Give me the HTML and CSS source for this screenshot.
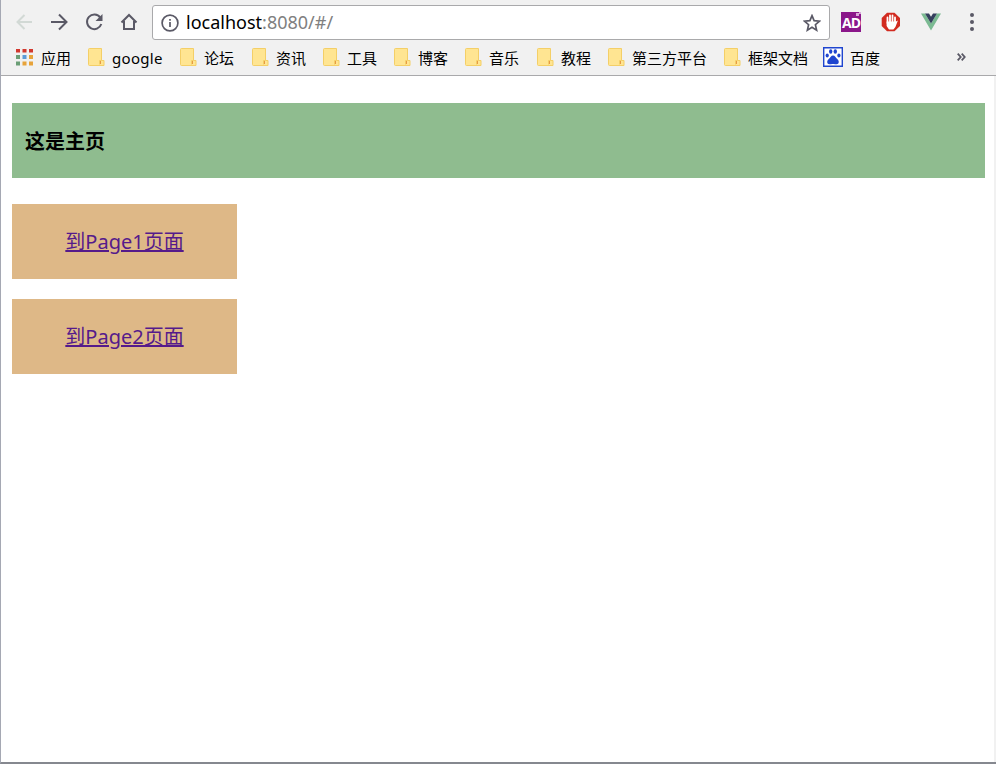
FILE: index.html
```html
<!DOCTYPE html>
<html lang="zh-CN">
<head>
<meta charset="utf-8">
<title>localhost:8080/#/</title>
<link rel="stylesheet" href="styles.css">
</head>
<body>
<svg class="defs" width="0" height="0">
  <symbol id="folder" viewBox="0 0 17 19">
    <path d="M1.500.5h12v12H16v5H1.500q-1 0-1-1V1.500q0-1 1-1z" fill="#ffe592" stroke="#f4cf67"/>
    <path d="M11.500 16.500v-4h2" fill="none" stroke="#f4cf67"/>
    <path d="M12 13h1v3h-1z" fill="#e79a45"/>
  </symbol>
</svg>
<div class="window">
  <header class="chrome">
    <div class="toolbar">
      <nav class="nav">
        <svg width="18" height="18" viewBox="0 0 18 18" class="ico faint"><path d="M17 9H2.500M9.500 2L2.500 9l7 7"/></svg>
        <svg width="18" height="18" viewBox="0 0 18 18" class="ico"><path d="M1 9h15M9 1.500L16.500 9 9 16.500"/></svg>
        <svg width="18" height="18" viewBox="0 0 18 18" class="ico"><path d="M15.300 4.600A7.300 7.300 0 1 0 16.300 11"/><path class="solid" d="M17.500 1v7h-7z"/></svg>
        <svg width="18" height="18" viewBox="0 0 18 18" class="ico"><path d="M1.500 9.500L9 2l7.500 7.500M4 8v8h10V8"/></svg>
      </nav>
      <div class="address">
        <svg width="18" height="18" viewBox="0 0 18 18" class="ico info"><circle cx="9" cy="9" r="7.900"/><path d="M9 8v5M9 5v1.800"/></svg>
        <span class="url">localhost<span class="dim">:8080/#/</span></span>
        <svg width="18" height="18" viewBox="0 0 18 18" class="ico star"><path d="M9 1.700l2.100 5 5.300.5-4 3.500 1.200 5.400L9 13.200l-4.600 2.900 1.200-5.400-4-3.500 5.300-.5z"/></svg>
      </div>
      <div class="extensions">
        <span class="ad">AD<svg width="5" height="5" viewBox="0 0 5 5"><path d="M0 1h3v3H0zM3 0h2v2H3z" fill="#d9a8d9"/></svg></span>
        <svg width="20" height="20" viewBox="0 0 20 20"><path d="M6 .7h7.500L19 6v8l-5.500 5.300H6L.7 14V6z" fill="#d22b20"/><path d="M6.500 11V5.500M9 10V3.500M11.500 10V3.500M14 11V5.500" stroke="#fff" stroke-width="1.800" stroke-linecap="round"/><path d="M5.600 9.500h9.300l2-1-2.500 6.500-2 2.500H8L5.600 14z" fill="#fff"/></svg>
        <svg width="20" height="18" viewBox="0 0 20 18"><path d="M0 .5h4l6 10 6-10h4L10 17.500z" fill="#7bba92"/><path d="M4 .5h4l2 3.200L12 .5h4l-6 10z" fill="#35405d"/></svg>
        <svg width="4" height="18" viewBox="0 0 4 18" fill="#5a5966"><circle cx="2" cy="2" r="2"/><circle cx="2" cy="9" r="2"/><circle cx="2" cy="16" r="2"/></svg>
      </div>
    </div>
    <div class="bookmarks">
      <span class="bookmark apps"><svg width="17" height="18" viewBox="0 0 17 18"><path d="M0 1h4v3.500H0zM6.500 1h4v3.500h-4zM13 1h4v3.500h-4z" fill="#d2382e"/><path d="M0 7h4v4H0zM0 13.500h4v4H0z" fill="#6b9e76"/><path d="M6.500 7h4v4h-4z" fill="#5c9bd6"/><path d="M13 7h4v4h-4zM6.500 13.500h4v4h-4zM13 13.500h4v4h-4z" fill="#e7a33a"/></svg><span>应用</span></span>
      <span class="bookmark"><svg width="17" height="19"><use href="#folder"/></svg><span class="latin">google</span></span>
      <span class="bookmark"><svg width="17" height="19"><use href="#folder"/></svg><span>论坛</span></span>
      <span class="bookmark"><svg width="17" height="19"><use href="#folder"/></svg><span>资讯</span></span>
      <span class="bookmark"><svg width="17" height="19"><use href="#folder"/></svg><span>工具</span></span>
      <span class="bookmark"><svg width="17" height="19"><use href="#folder"/></svg><span>博客</span></span>
      <span class="bookmark"><svg width="17" height="19"><use href="#folder"/></svg><span>音乐</span></span>
      <span class="bookmark"><svg width="17" height="19"><use href="#folder"/></svg><span>教程</span></span>
      <span class="bookmark"><svg width="17" height="19"><use href="#folder"/></svg><span>第三方平台</span></span>
      <span class="bookmark"><svg width="17" height="19"><use href="#folder"/></svg><span>框架文档</span></span>
      <span class="bookmark baidu"><svg width="20" height="20" viewBox="0 0 20 20"><path d="M.7.700h18.600v18.600H.7z" fill="#fff" stroke="#1f45cf" stroke-width="1.400"/><g fill="#1f45cf"><ellipse cx="4.200" cy="8.500" rx="1.600" ry="2"/><ellipse cx="7.700" cy="4.500" rx="1.700" ry="2.200"/><ellipse cx="12.300" cy="4.500" rx="1.700" ry="2.200"/><ellipse cx="15.900" cy="8.500" rx="1.600" ry="2"/><path d="M10 8.500c2 0 2.500 2 4.500 3.800s1.500 5-.8 5c-1.400 0-2.200-.4-3.700-.4s-2.300.4-3.700.4c-2.300 0-2.800-3.200-.8-5S8 8.500 10 8.500z"/></g></svg><span>百度</span></span>
      <svg class="more" width="9" height="8" viewBox="0 0 9 8"><path d="M.7.700L3.700 4l-3 3.300M4.700.700L7.700 4l-3 3.300"/></svg>
    </div>
  </header>
  <main class="page">
    <h3 class="title">这是主页</h3>
    <div class="card"><a href="#/page1">到Page1页面</a></div>
    <div class="card"><a href="#/page2">到Page2页面</a></div>
  </main>
</div>
</body>
</html>
```
FILE: styles.css
```css
* { box-sizing: border-box; }
body {
  margin: 0;
  background: #f1f1f1;
  font-family: "Noto Sans", "Noto Sans CJK SC", sans-serif;
}
.defs { position: absolute; }
svg { flex: none; display: block; }
.window {
  display: flex;
  flex-direction: column;
  height: 764px;
  border-left: 1px solid #a5a8b3;
  border-bottom: 2px solid #85888f;
}
.chrome {
  height: 76px;
  background: #f1f1f1;
  border-bottom: 1px solid #a9a9ab;
}
.toolbar {
  display: flex;
  align-items: center;
  height: 40px;
  padding: 5px 0 0 14px;
}
.nav { display: flex; gap: 17px; width: 137px; padding-bottom: 2px; }
.ico { fill: none; stroke: #5a5966; stroke-width: 2; }
.ico .solid { fill: #5a5966; stroke: none; }
.faint { stroke: #d2d9d5; }
.info, .star { stroke-width: 1.700; }
.address {
  display: flex;
  align-items: center;
  width: 678px;
  height: 35px;
  padding: 0 8px;
  background: #fff;
  border: 1px solid #a9a9ab;
  border-radius: 3px;
}
.url {
  flex: 1;
  padding-left: 7px;
  font-size: 18px;
  line-height: 33px;
  color: #000;
}
.dim { color: #808080; }
.extensions {
  display: flex;
  align-items: center;
  gap: 20px;
  padding: 0 0 1px 11px;
}
.extensions > svg:last-child { margin-left: 9px; }
.ad {
  position: relative;
  width: 20px;
  height: 20px;
  font: bold 14px/21px "Open Sans", sans-serif;
  letter-spacing: -1px;
  text-align: center;
  color: #fff;
  background: #8b178a;
}
.ad svg { position: absolute; top: 0; right: 0; }
.bookmarks {
  display: grid;
  grid-template-columns: 72px 92px 72px 71px 71px 71px 72px 71px 116px 99px 134px 10px;
  align-items: center;
  height: 34px;
  padding-left: 15px;
}
.bookmark {
  display: flex;
  align-items: center;
  gap: 7px;
  font-size: 15px;
  line-height: 20px;
  white-space: nowrap;
  color: #000;
}
.bookmark span { padding-top: 1px; }
.latin { letter-spacing: .3px; }
.apps { gap: 8px; }
.more { fill: none; stroke: #5a5966; stroke-width: 1.800; }
.page {
  flex: 1;
  margin-right: 2px;
  padding: 27px 9px 0 11px;
  background: #fff;
}
.title {
  margin: 0 0 26px;
  padding-left: 13px;
  height: 75px;
  font-size: 20px;
  line-height: 77px;
  background: #8fbc8f;
}
.card {
  width: 225px;
  height: 75px;
  margin-bottom: 20px;
  font-size: 20px;
  line-height: 75px;
  text-align: center;
  background: #deb887;
}
.card a { color: #551a8b; text-decoration-thickness: 2px; }
```
